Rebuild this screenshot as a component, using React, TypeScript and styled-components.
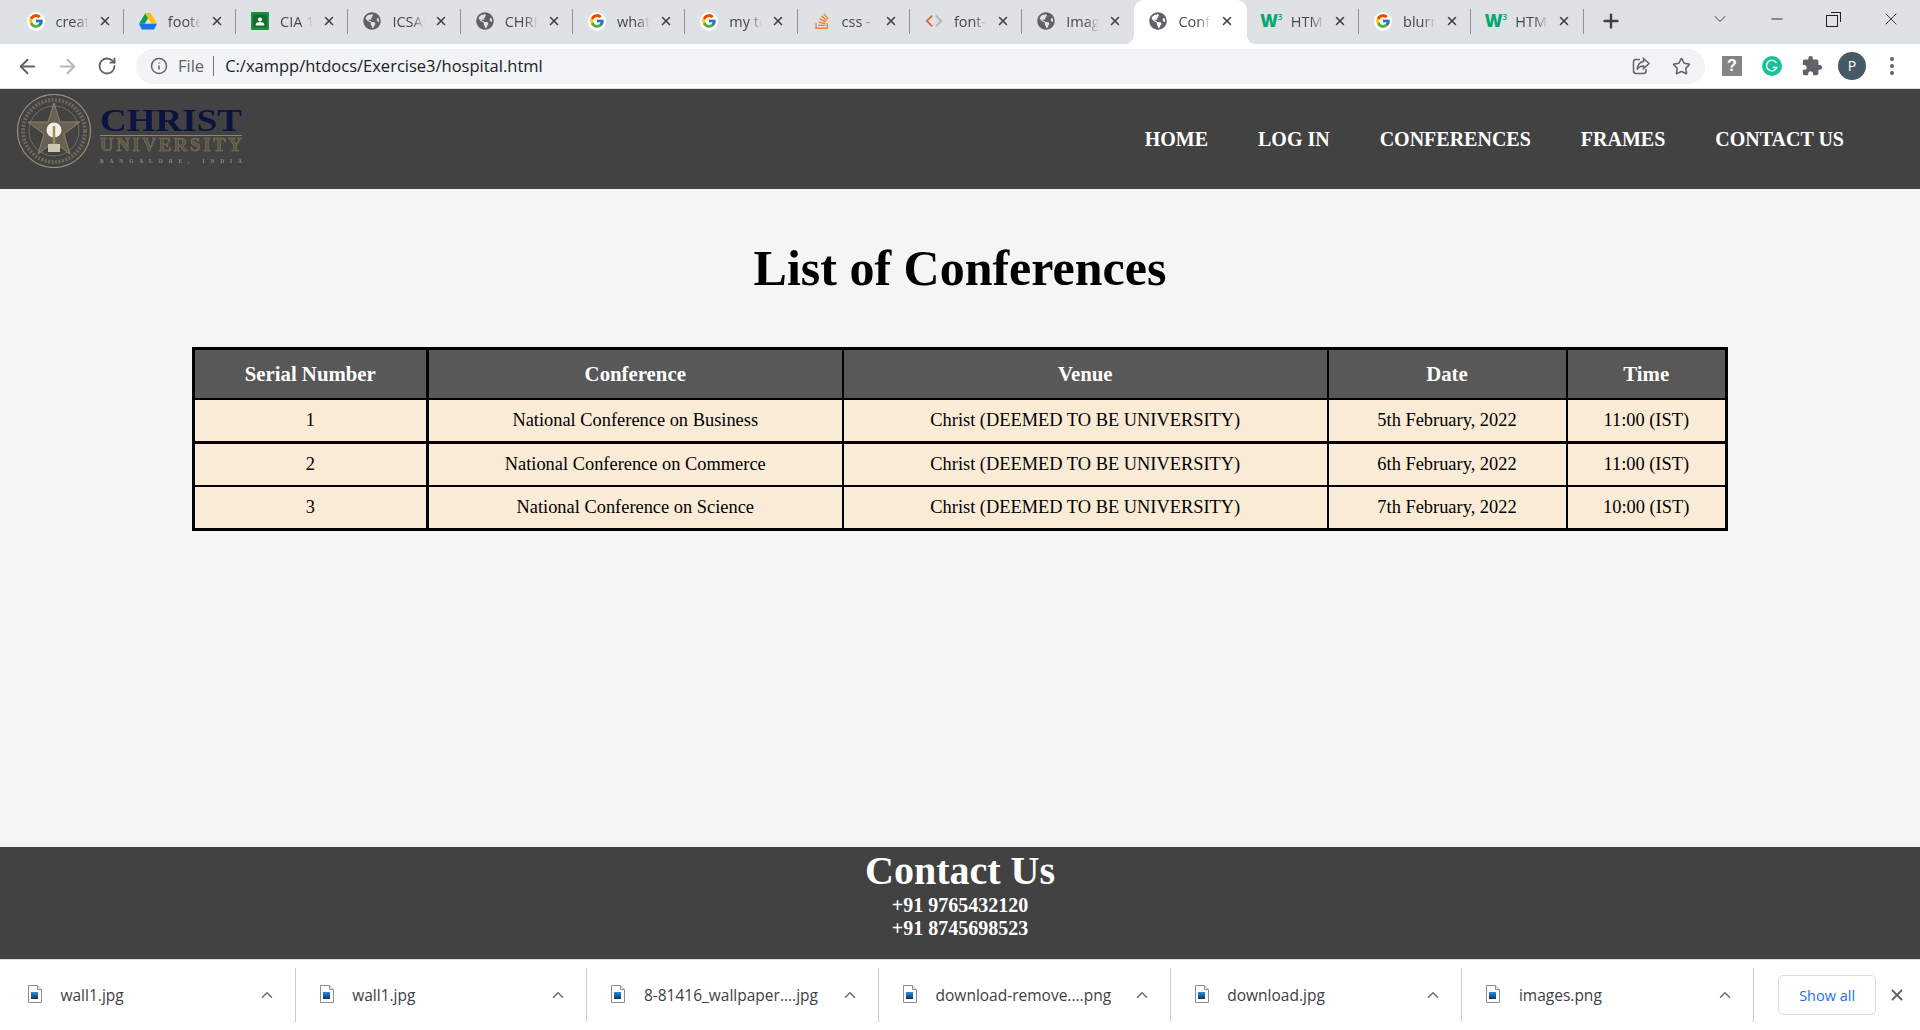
import React from "react";
import styled, { createGlobalStyle } from "styled-components";
import {
  ArrowLeft,
  ArrowRight,
  ChevronDown,
  ChevronUp,
  Info,
  Minus,
  Plus,
  RotateCw,
  Star,
  X,
} from "lucide-react";
import { FaGlobeAmericas, FaStackOverflow } from "react-icons/fa";
import { FcGoogle } from "react-icons/fc";
import { MdExtension } from "react-icons/md";

const GlobalStyle = createGlobalStyle`
  html, body {
    margin: 0;
    padding: 0;
    height: 100%;
    overflow: hidden;
    background: #f5f5f5;
  }
`;

const UI_FONT = `"Open Sans", "Noto Sans", sans-serif`;
const PAGE_FONT = `"Liberation Serif", "Times New Roman", serif`;

const Page = styled.div`
  width: 1920px;
  height: 1030px;
  display: flex;
  flex-direction: column;
  overflow: hidden;
`;

/* ---- browser chrome ---- */
const TabStrip = styled.div`
  height: 44px;
  flex: none;
  display: flex;
  align-items: stretch;
  padding-left: 11.5px;
  background: #dee1e6;
  font-family: ${UI_FONT};
`;

const Tab = styled.div<{ $active?: boolean; $sep?: boolean }>`
  position: relative;
  box-sizing: border-box;
  width: 112.3px;
  flex: none;
  display: flex;
  align-items: center;
  padding: 0 0 2px 15px;
  background: ${(p) => (p.$active ? "#fff" : "transparent")};
  border-radius: ${(p) => (p.$active ? "10px 10px 0 0" : "0")};

  &::before {
    content: "";
    display: ${(p) => (p.$active ? "block" : "none")};
    position: absolute;
    left: -8px;
    bottom: 0;
    width: 8px;
    height: 8px;
    background: radial-gradient(circle at 0 0, transparent 7.5px, #fff 8px);
  }

  &::after {
    content: "";
    display: ${(p) => (p.$sep || p.$active ? "block" : "none")};
    position: absolute;
    right: ${(p) => (p.$active ? "-8px" : "0")};
    top: ${(p) => (p.$active ? "auto" : "9px")};
    bottom: ${(p) => (p.$active ? "0" : "auto")};
    height: ${(p) => (p.$active ? "8px" : "25px")};
    width: ${(p) => (p.$active ? "8px" : "1px")};
    background: ${(p) =>
      p.$active ? "radial-gradient(circle at 100% 0, transparent 7.5px, #fff 8px)" : "#8f9296"};
  }
`;

const FaviconSlot = styled.span`
  width: 18px;
  height: 18px;
  flex: none;
  display: flex;
  align-items: center;
  justify-content: center;
`;

const GoogleBadge = styled.span`
  width: 19px;
  height: 19px;
  border-radius: 50%;
  background: #fff;
  display: flex;
  align-items: center;
  justify-content: center;
`;

const W3Mark = styled.span`
  font-family: ${UI_FONT};
  font-weight: 800;
  font-size: 17px;
  line-height: 18px;
  letter-spacing: -1px;
  color: #04aa6d;
  white-space: nowrap;

  sup {
    font-size: 8px;
    line-height: 0;
    font-weight: 600;
    margin-left: 1px;
  }
`;

const TabTitle = styled.span`
  width: 33px;
  margin-left: 11px;
  flex: none;
  overflow: hidden;
  white-space: nowrap;
  font-size: 14.5px;
  color: #45494e;
  mask-image: linear-gradient(to right, #000 60%, transparent 100%);
`;

const TabClose = styled.span`
  margin-left: 9px;
  width: 14px;
  display: flex;
  align-items: center;
  justify-content: center;
  color: #3c4043;
`;

const NewTab = styled.span`
  width: 26px;
  margin-left: 14px;
  padding-bottom: 2px;
  display: flex;
  align-items: center;
  justify-content: center;
  color: #3c4043;
`;

const WindowControls = styled.div`
  margin-left: auto;
  margin-right: 1px;
  display: flex;
  height: 38px;
`;

const WindowButton = styled.span`
  width: 57px;
  display: flex;
  align-items: center;
  justify-content: center;
  color: #1f1f1f;
`;

const RestoreIcon = styled.span`
  position: relative;
  width: 10px;
  height: 10px;
  margin: 3px 3px 0 0;
  border: 1px solid #1f1f1f;

  &::after {
    content: "";
    position: absolute;
    top: -4px;
    right: -4px;
    width: 9px;
    height: 9px;
    border-top: 1px solid #1f1f1f;
    border-right: 1px solid #1f1f1f;
  }
`;

const Toolbar = styled.div`
  height: 44px;
  flex: none;
  box-sizing: content-box;
  display: flex;
  align-items: center;
  padding-left: 7px;
  background: #fff;
  border-bottom: 1px solid #dcdcdc;
  font-family: ${UI_FONT};
`;

const NavButton = styled.span<{ $dim?: boolean }>`
  width: 40px;
  display: flex;
  align-items: center;
  justify-content: center;
  color: ${(p) => (p.$dim ? "#b4b6b9" : "#5f6368")};
`;

const Omnibox = styled.div`
  width: 1569px;
  height: 35px;
  margin: 0 7.5px 0 8.5px;
  box-sizing: border-box;
  padding: 0 14px;
  display: flex;
  align-items: center;
  background: #f1f3f4;
  border-radius: 18px;
  color: #5f6368;
`;

const Scheme = styled.span`
  margin: 0 0 2px 10.5px;
  font-size: 16.5px;
  color: #5f6368;
`;

const OmniDivider = styled.span`
  width: 1px;
  height: 20px;
  margin: 0 11.5px 0 8.5px;
  background: #70757a;
`;

const Url = styled.span`
  margin-bottom: 2px;
  font-size: 16.5px;
  color: #202124;
`;

const OmniActions = styled.div`
  margin-left: auto;
  display: flex;
  align-items: center;
  gap: 21px;
`;

const ExtButton = styled.span`
  width: 40px;
  display: flex;
  align-items: center;
  justify-content: center;
  color: #5f6368;
`;

const HelpBox = styled.span`
  width: 20px;
  height: 20px;
  background: #858585;
  color: #fff;
  font-family: "Liberation Sans", sans-serif;
  font-weight: 700;
  font-size: 16px;
  line-height: 20px;
  text-align: center;
`;

const Avatar = styled.span`
  width: 28px;
  height: 28px;
  border-radius: 50%;
  background: #455a64;
  color: #fff;
  font-size: 14px;
  line-height: 28px;
  text-align: center;
`;

const Dots = styled.span`
  display: flex;
  flex-direction: column;
  gap: 3px;

  i {
    width: 4px;
    height: 4px;
    border-radius: 50%;
    background: #5f6368;
  }
`;

/* ---- page ---- */
const SiteHeader = styled.header`
  height: 100px;
  flex: none;
  display: flex;
  align-items: center;
  justify-content: space-between;
  padding: 0 76px 0 16px;
  background: #424242;
  font-family: ${PAGE_FONT};
`;

const LogoSvg = styled.svg`
  display: block;
  margin-bottom: 16px;
  filter: blur(0.6px);
`;

const Nav = styled.nav`
  display: flex;
  gap: 50px;
`;

const NavLink = styled.a`
  color: #fff;
  font-size: 20px;
  font-weight: 700;
  text-decoration: none;
`;

const Main = styled.main`
  flex: 1;
  padding-top: 51px;
  background: #f5f5f5;
  font-family: ${PAGE_FONT};
`;

const Title = styled.h1`
  margin: 0 0 50px;
  text-align: center;
  font-size: 50px;
  line-height: 57px;
  font-weight: 700;
  color: #000;
`;

const Table = styled.table`
  width: 1533px;
  margin: 0 auto;
  table-layout: fixed;
  border-collapse: collapse;
  border: 3px solid #000;
`;

const HeadCell = styled.th`
  height: 50px;
  padding: 0;
  box-sizing: border-box;
  background: #585858;
  color: #fff;
  font-size: 20.8px;
  font-weight: 700;
  border: 2px solid #000;

  &:first-child {
    border-right-width: 3px;
  }
`;

const Cell = styled.td`
  height: 43.5px;
  padding: 0;
  box-sizing: border-box;
  background: #faebd7;
  color: #000;
  font-size: 18.4px;
  text-align: center;
  border: 2px solid #000;

  &:first-child {
    border-right-width: 3px;
  }
  tr:first-child > & {
    border-bottom-width: 3px;
  }
`;

const Footer = styled.footer`
  height: 112px;
  flex: none;
  box-sizing: border-box;
  padding-top: 1px;
  background: #424242;
  color: #fff;
  text-align: center;
  font-family: ${PAGE_FONT};
  font-weight: 700;
`;

const FooterTitle = styled.h2`
  margin: 0;
  font-size: 40px;
  line-height: 46px;
`;

const Phone = styled.div`
  font-size: 20px;
  line-height: 23px;
`;

/* ---- download shelf ---- */
const Shelf = styled.div`
  height: 70px;
  flex: none;
  display: flex;
  align-items: center;
  padding-left: 4px;
  background: #fff;
  border-top: 1px solid #dcdcdc;
  font-family: ${UI_FONT};
`;

const DownloadItem = styled.div`
  width: 291.7px;
  height: 54px;
  flex: none;
  box-sizing: border-box;
  display: flex;
  align-items: center;
  padding: 0 19px 0 24px;
  border-right: 1px solid #cccccc;
`;

const FileName = styled.span`
  flex: 1;
  margin-left: 18.5px;
  font-size: 15.5px;
  color: #3c4043;
`;

const Chevron = styled.span`
  display: flex;
  color: #6b6e72;
`;

const ShowAll = styled.button`
  width: 98px;
  height: 40px;
  margin-left: 24px;
  padding: 0;
  background: #fff;
  border: 1px solid #dadce0;
  border-radius: 5px;
  color: #1a73e8;
  font-family: ${UI_FONT};
  font-size: 14.5px;
`;

const ShelfClose = styled.span`
  display: flex;
  margin-left: 12px;
  color: #5f6368;
`;

type Favicon = "google" | "drive" | "classroom" | "globe" | "stack" | "code" | "w3";

const tabs: { icon: Favicon; title: string; active?: boolean; sep?: boolean }[] = [
  { icon: "google", title: "create", sep: true },
  { icon: "drive", title: "footer", sep: true },
  { icon: "classroom", title: "CIA 1", sep: true },
  { icon: "globe", title: "ICSAC", sep: true },
  { icon: "globe", title: "CHRIS", sep: true },
  { icon: "google", title: "what", sep: true },
  { icon: "google", title: "my te", sep: true },
  { icon: "stack", title: "css -", sep: true },
  { icon: "code", title: "font-", sep: true },
  { icon: "globe", title: "Image" },
  { icon: "globe", title: "Confe", active: true },
  { icon: "w3", title: "HTML", sep: true },
  { icon: "google", title: "blurr", sep: true },
  { icon: "w3", title: "HTML", sep: true },
];

const navItems = ["HOME", "LOG IN", "CONFERENCES", "FRAMES", "CONTACT US"];

const columns = [233.5, 416, 484.5, 239, 160];
const headers = ["Serial Number", "Conference", "Venue", "Date", "Time"];
const rows = [
  ["1", "National Conference on Business", "Christ (DEEMED TO BE UNIVERSITY)", "5th February, 2022", "11:00 (IST)"],
  ["2", "National Conference on Commerce", "Christ (DEEMED TO BE UNIVERSITY)", "6th February, 2022", "11:00 (IST)"],
  ["3", "National Conference on Science", "Christ (DEEMED TO BE UNIVERSITY)", "7th February, 2022", "10:00 (IST)"],
];

const downloads = [
  "wall1.jpg",
  "wall1.jpg",
  "8-81416_wallpaper....jpg",
  "download-remove....png",
  "download.jpg",
  "images.png",
];

const TabIcon = ({ icon }: { icon: Favicon }) => {
  switch (icon) {
    case "google":
      return (
        <GoogleBadge>
          <FcGoogle size={16} />
        </GoogleBadge>
      );
    case "drive":
      return (
        <svg width="19" height="17" viewBox="0 0 19 17">
          <polygon points="6.5,0 12.5,0 6,11 0,11" fill="#0f9d58" />
          <polygon points="12.5,0 19,11 13,11 6.5,0" fill="#ffc107" />
          <polygon points="0,11 19,11 16,17 3,17" fill="#1a73e8" />
        </svg>
      );
    case "classroom":
      return (
        <svg width="18" height="18" viewBox="0 0 18 18">
          <rect width="18" height="18" rx="1" fill="#1e8e3e" />
          <rect x="2" y="2.5" width="14" height="13" fill="#146c2e" />
          <circle cx="9" cy="7.5" r="2.1" fill="#fff" />
          <path d="M4.5 13.5c0-2.4 2-3.4 4.5-3.4s4.5 1 4.5 3.4z" fill="#fff" />
        </svg>
      );
    case "globe":
      return <FaGlobeAmericas size={18} color="#5f6368" />;
    case "stack":
      return <FaStackOverflow size={18} color="#f48024" />;
    case "code":
      return (
        <svg width="20" height="16" viewBox="0 0 20 16" fill="none" strokeWidth="2">
          <path d="M8 2 2 8l6 6" stroke="#e8673c" />
          <path d="m12 2 6 6-6 6" stroke="#b0b3b8" />
        </svg>
      );
    default:
      return (
        <W3Mark>
          W<sup>3</sup>
        </W3Mark>
      );
  }
};

const FileIcon = () => (
  <svg width="14" height="18" viewBox="0 0 14 18" style={{ flex: "none", marginBottom: 3 }}>
    <path d="M.5.5h9l4 4v13H.5z" fill="#fff" stroke="#8a8d91" />
    <path d="M9.5.5v4h4" fill="#eee" stroke="#8a8d91" />
    <defs>
      <linearGradient id="fileFill" x1="0" y1="0" x2="0" y2="1">
        <stop offset="0" stopColor="#2a8fe0" />
        <stop offset="1" stopColor="#12305f" />
      </linearGradient>
    </defs>
    <rect x="3" y="7" width="7" height="7" fill="url(#fileFill)" />
  </svg>
);

const ShareIcon = () => (
  <svg width="20" height="20" viewBox="0 0 20 20" fill="none" stroke="#5f6368" strokeWidth="1.5">
    <path d="M9 3.5H5A2.5 2.5 0 0 0 2.5 6v9A2.5 2.5 0 0 0 5 17.5h7.5A2.5 2.5 0 0 0 15 15v-2" />
    <path d="M12.5 2.5 18 7.5l-5.5 5V10c-3 0-5 1-6.5 3.5C6.5 9.5 9 6 12.5 5.5z" />
  </svg>
);

const Logo = () => (
  <LogoSvg width="232" height="74" viewBox="0 0 232 74">
    <g fill="none" stroke="#9a8f78">
      <circle cx="38" cy="37" r="36.5" strokeWidth="1.2" />
      <circle cx="38" cy="37" r="31" strokeWidth="4" strokeDasharray="2 1.5" opacity="0.5" />
      <circle cx="38" cy="37" r="25" strokeWidth="0.8" opacity="0.7" />
      <polygon
        points="38,9 44,28 64,28 48,40 54,60 38,48 22,60 28,40 12,28 32,28"
        strokeWidth="0.8"
        fill="#8f7f5f"
        fillOpacity="0.5"
      />
    </g>
    <circle cx="38" cy="36" r="7.5" fill="#f4efe4" />
    <rect x="36.8" y="32" width="2.4" height="18" fill="#9c8a63" />
    <rect x="32" y="50" width="12" height="8" fill="#cfc6b2" />
    <g fontFamily={PAGE_FONT} fontWeight="700">
      <text x="84" y="37" fontSize="31" textLength="142" lengthAdjust="spacingAndGlyphs" fill="#0c1340">
        CHRIST
      </text>
      <text x="84" y="57" fontSize="19" textLength="142" fill="#5c5648" stroke="#85785d" strokeWidth="0.5">
        UNIVERSITY
      </text>
      <text x="84" y="69" fontSize="5.5" textLength="142" fill="#8a8a8a">
        BANGALORE, INDIA
      </text>
    </g>
    <rect x="84" y="41" width="142" height="1" fill="#8d8672" />
  </LogoSvg>
);

const GrammarlyIcon = () => (
  <svg width="20" height="20" viewBox="0 0 20 20" fill="none">
    <circle cx="10" cy="10" r="10" fill="#15c39a" />
    <path d="M14.5 7a5.3 5.3 0 1 0 .3 4.5h-4" stroke="#fff" strokeWidth="1.4" />
  </svg>
);

export default function App() {
  return (
    <Page>
      <GlobalStyle />
      <TabStrip>
        {tabs.map((tab, i) => (
          <Tab key={i} $active={tab.active} $sep={tab.sep}>
            <FaviconSlot>
              <TabIcon icon={tab.icon} />
            </FaviconSlot>
            <TabTitle>{tab.title}</TabTitle>
            <TabClose>
              <X size={16} strokeWidth={2.6} />
            </TabClose>
          </Tab>
        ))}
        <NewTab>
          <Plus size={22} strokeWidth={2.6} />
        </NewTab>
        <WindowControls>
          <WindowButton>
            <ChevronDown size={20} strokeWidth={1} />
          </WindowButton>
          <WindowButton>
            <Minus size={18} strokeWidth={1.2} />
          </WindowButton>
          <WindowButton>
            <RestoreIcon />
          </WindowButton>
          <WindowButton>
            <X size={20} strokeWidth={1} />
          </WindowButton>
        </WindowControls>
      </TabStrip>

      <Toolbar>
        <NavButton>
          <ArrowLeft size={23} strokeWidth={2} />
        </NavButton>
        <NavButton $dim>
          <ArrowRight size={23} strokeWidth={2} />
        </NavButton>
        <NavButton>
          <RotateCw size={20} strokeWidth={2.2} />
        </NavButton>
        <Omnibox>
          <Info size={18} strokeWidth={2} />
          <Scheme>File</Scheme>
          <OmniDivider />
          <Url>C:/xampp/htdocs/Exercise3/hospital.html</Url>
          <OmniActions>
            <ShareIcon />
            <Star size={19} strokeWidth={2} />
          </OmniActions>
        </Omnibox>
        <ExtButton>
          <HelpBox>?</HelpBox>
        </ExtButton>
        <ExtButton>
          <GrammarlyIcon />
        </ExtButton>
        <ExtButton>
          <MdExtension size={22} />
        </ExtButton>
        <ExtButton>
          <Avatar>P</Avatar>
        </ExtButton>
        <ExtButton>
          <Dots>
            <i />
            <i />
            <i />
          </Dots>
        </ExtButton>
      </Toolbar>

      <SiteHeader>
        <Logo />
        <Nav>
          {navItems.map((item) => (
            <NavLink key={item}>{item}</NavLink>
          ))}
        </Nav>
      </SiteHeader>

      <Main>
        <Title>List of Conferences</Title>
        <Table>
          <colgroup>
            {columns.map((w, i) => (
              <col key={i} style={{ width: w }} />
            ))}
          </colgroup>
          <thead>
            <tr>
              {headers.map((h) => (
                <HeadCell key={h}>{h}</HeadCell>
              ))}
            </tr>
          </thead>
          <tbody>
            {rows.map((row) => (
              <tr key={row[0]}>
                {row.map((value, i) => (
                  <Cell key={i}>{value}</Cell>
                ))}
              </tr>
            ))}
          </tbody>
        </Table>
      </Main>

      <Footer>
        <FooterTitle>Contact Us</FooterTitle>
        <Phone>+91 9765432120</Phone>
        <Phone>+91 8745698523</Phone>
      </Footer>

      <Shelf>
        {downloads.map((name, i) => (
          <DownloadItem key={i}>
            <FileIcon />
            <FileName>{name}</FileName>
            <Chevron>
              <ChevronUp size={18} strokeWidth={2} />
            </Chevron>
          </DownloadItem>
        ))}
        <ShowAll>Show all</ShowAll>
        <ShelfClose>
          <X size={18} strokeWidth={2.4} />
        </ShelfClose>
      </Shelf>
    </Page>
  );
}
